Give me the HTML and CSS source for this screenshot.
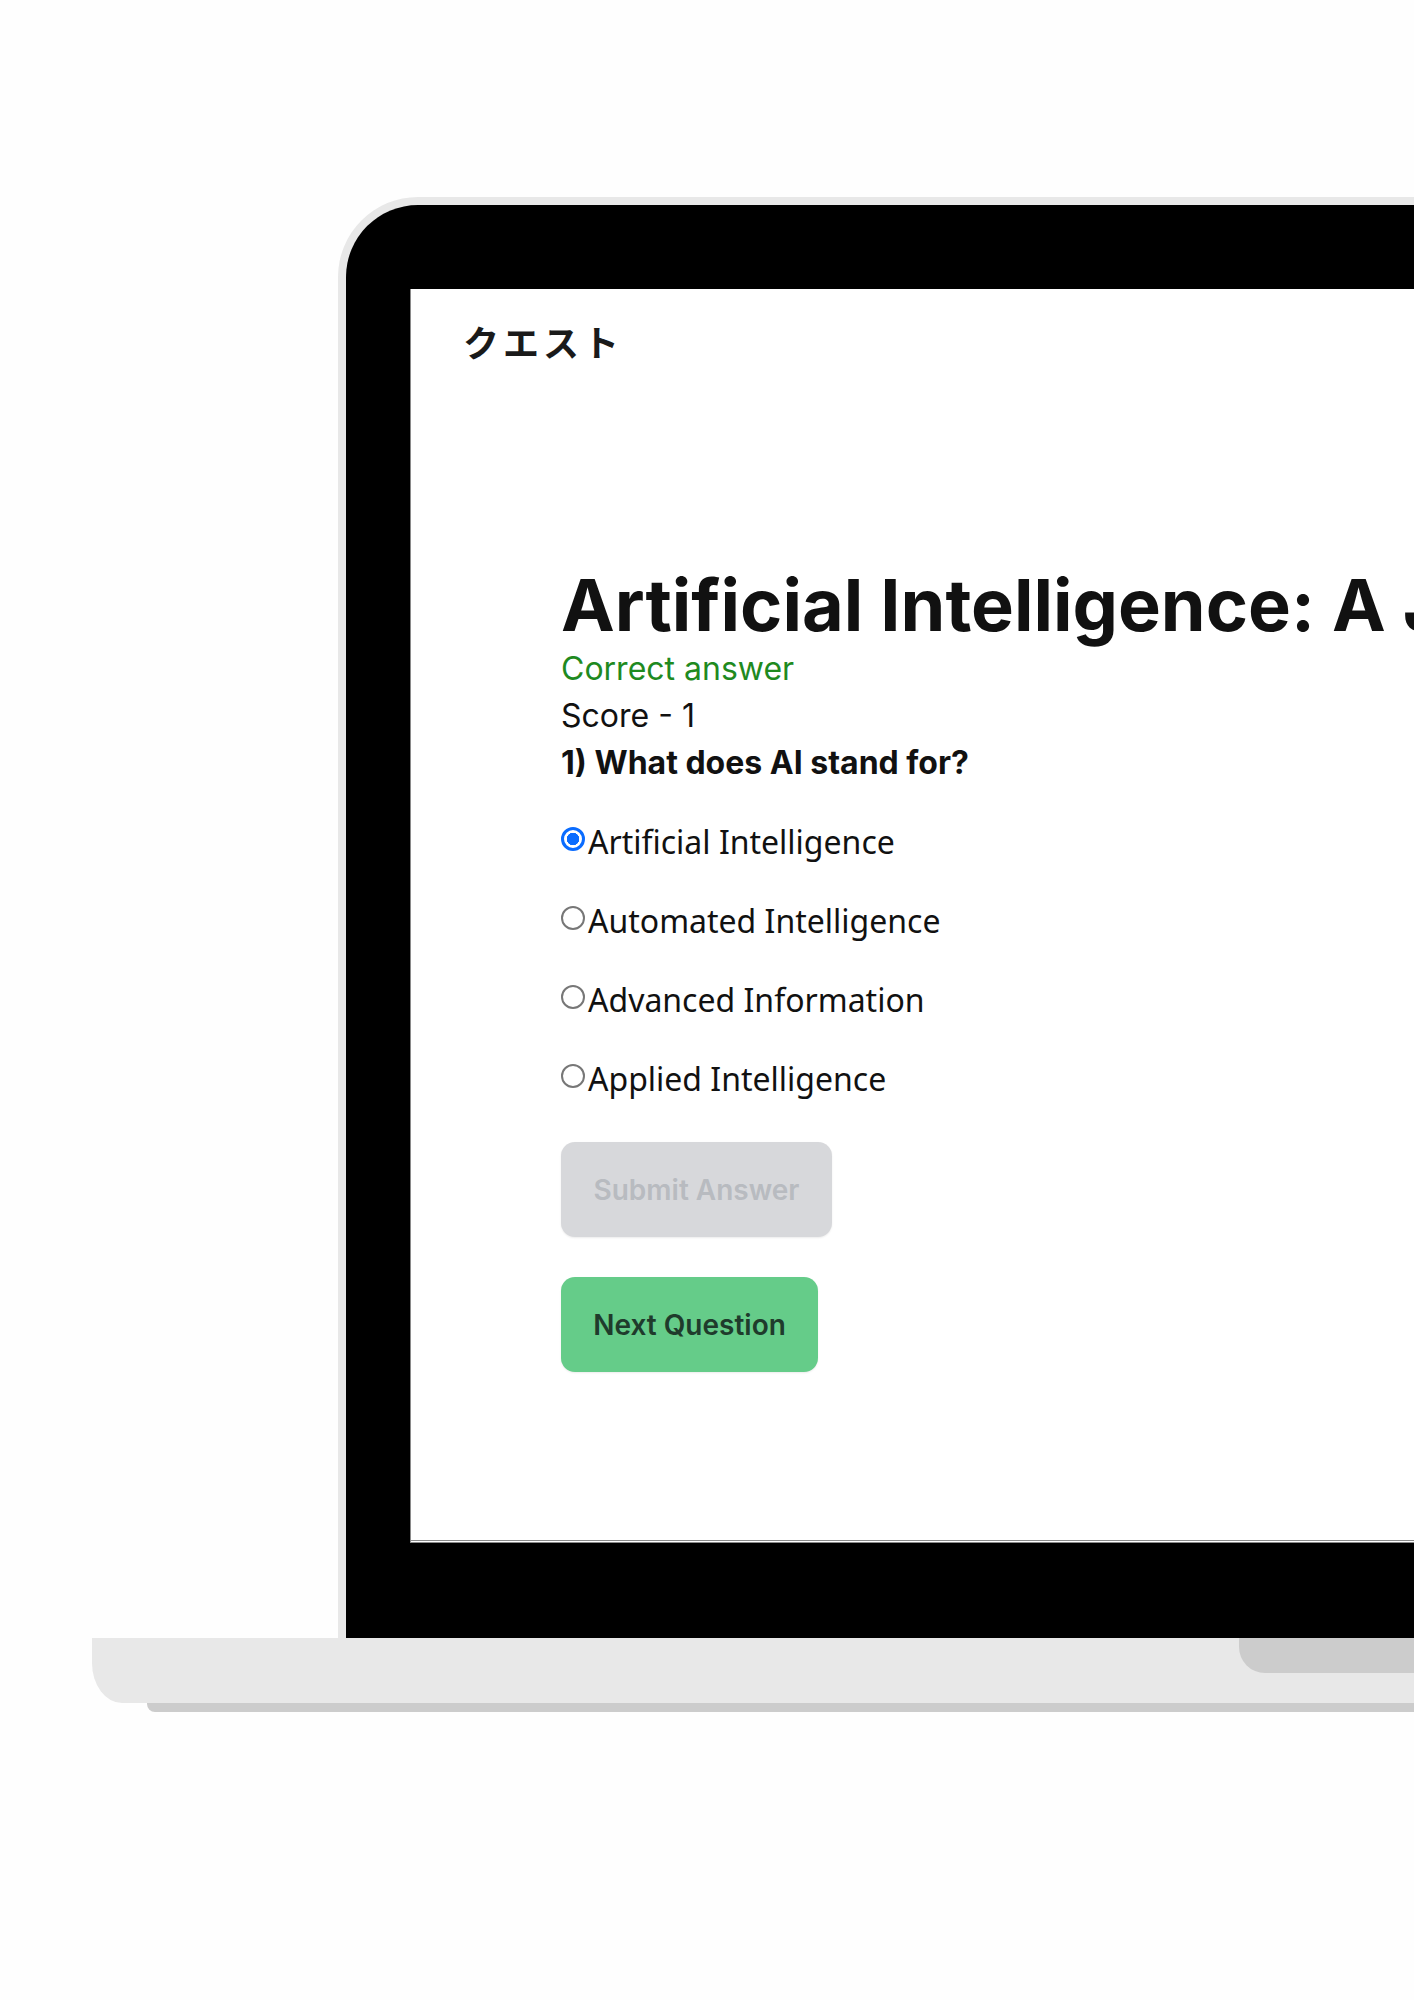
FILE: index.html
```html
<!DOCTYPE html>
<html lang="ja">
<head>
<meta charset="utf-8">
<title>クエスト</title>
<link rel="stylesheet" href="styles.css">
</head>
<body>
<div class="page">
  <div class="laptop">
    <div class="lid">
      <div class="bezel">
        <div class="screen">
          <header class="topbar">
            <span class="brand">クエスト</span>
          </header>
          <main class="quiz">
            <h1 class="quiz-title">Artificial Intelligence: A Journey</h1>
            <p class="status">Correct answer</p>
            <p class="score">Score - 1</p>
            <p class="question">1) What does AI stand for?</p>
            <div class="options">
              <label class="option"><input type="radio" name="q1" checked><span>Artificial Intelligence</span></label>
              <label class="option"><input type="radio" name="q1"><span>Automated Intelligence</span></label>
              <label class="option"><input type="radio" name="q1"><span>Advanced Information</span></label>
              <label class="option"><input type="radio" name="q1"><span>Applied Intelligence</span></label>
            </div>
            <div class="actions">
              <button class="btn btn-disabled" disabled>Submit Answer</button>
              <button class="btn btn-next">Next Question</button>
            </div>
          </main>
        </div>
      </div>
    </div>
    <div class="base">
      <div class="notch"></div>
    </div>
    <div class="foot"></div>
  </div>
</div>
</body>
</html>
```
FILE: styles.css
```css
html, body {
  margin: 0;
  padding: 0;
  background: #fefefe;
}

.page {
  width: 1414px;
  height: 2000px;
  overflow: hidden;
  font-family: Inter, "Noto Sans CJK JP", sans-serif;
  color: #111;
}

.laptop {
  padding-top: 197px;
  width: 1600px;
}

.lid {
  margin-left: 338px;
  background: #e8e8e8;
  padding: 8px 0 0 8px;
  border-top-left-radius: 80px;
}

.bezel {
  background: #000;
  border-top-left-radius: 72px;
  padding: 84px 0 95px 64px;
}

.screen {
  background: #fff;
  height: 1251px;
  border-left: 1px solid #8a8a8a;
  border-bottom: 3px double #8a8a8a;
}

.topbar {
  padding: 29px 0 0 52px;
  height: 65px;
}

.brand {
  font-family: "Noto Sans CJK JP", sans-serif;
  font-size: 36px;
  font-weight: 700;
  letter-spacing: 4px;
  color: #1a1a1a;
  line-height: 46px;
}

.quiz {
  padding: 186px 0 0 150px;
}

.quiz-title {
  margin: 0;
  font-size: 72px;
  line-height: 72px;
  font-weight: 700;
  letter-spacing: 0;
  white-space: nowrap;
  color: #111;
}

.status,
.score,
.question {
  margin: 0;
  font-size: 32px;
  line-height: 47px;
}

.status {
  margin-top: 4px;
  color: #1f8a1f;
}

.score {
  color: #111;
}

.question {
  font-weight: 700;
  color: #111;
}

.options {
  display: flex;
  flex-direction: column;
  gap: 39px;
  margin-top: 36px;
}

.option {
  display: flex;
  align-items: center;
  gap: 3px;
  font-family: "Noto Sans", "Open Sans", sans-serif;
  font-size: 32px;
  line-height: 40px;
  color: #111;
}

.option input {
  appearance: none;
  -webkit-appearance: none;
  margin: 0;
  width: 24px;
  height: 24px;
  border: 2px solid #777;
  border-radius: 50%;
  box-sizing: border-box;
  background: #fff;
  position: relative;
  top: -3px;
}

.option input:checked {
  border: 3px solid #0a6cff;
  background: radial-gradient(circle, #0a6cff 0 6px, #fff 6.5px);
}

.actions {
  display: flex;
  flex-direction: column;
  align-items: flex-start;
  gap: 40px;
  margin-top: 43px;
}

.btn {
  font-family: Inter, sans-serif;
  font-size: 28px;
  font-weight: 600;
  border: none;
  border-radius: 14px;
  height: 95px;
  padding: 0;
}

.btn-disabled {
  background: #d7d8db;
  color: #b8bbc0;
  width: 271px;
  box-shadow: 0 1px 2px rgba(0,0,0,0.08);
}

.btn-next {
  background: #65cc89;
  color: #1f3b2c;
  width: 257px;
  box-shadow: 0 1px 2px rgba(0,0,0,0.08);
}

.base {
  margin-left: 92px;
  height: 65px;
  background: #e8e8e8;
  border-bottom-left-radius: 30px 40px;
  display: flex;
}

.notch {
  margin-left: 1147px;
  height: 35px;
  flex: 1;
  background: #cccccc;
  border-bottom-left-radius: 26px;
}

.foot {
  margin-left: 147px;
  height: 9px;
  background: #cccccc;
  border-bottom-left-radius: 8px;
}
```
